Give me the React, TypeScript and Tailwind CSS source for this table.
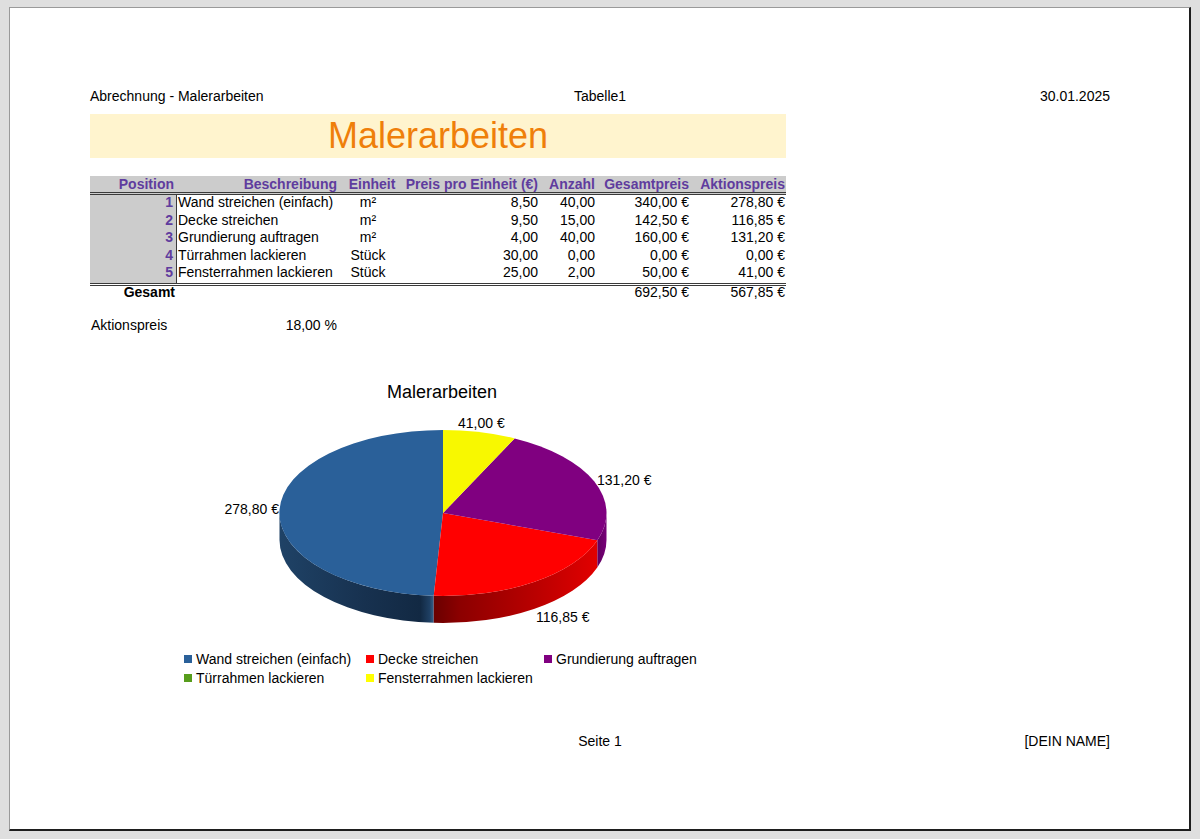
import React from "react";

type Row = { pos: number; desc: string; unit: string; price: string; qty: string; total: string; promo: string };

const rows: Row[] = [
  { pos: 1, desc: "Wand streichen (einfach)", unit: "m²", price: "8,50", qty: "40,00", total: "340,00 €", promo: "278,80 €" },
  { pos: 2, desc: "Decke streichen", unit: "m²", price: "9,50", qty: "15,00", total: "142,50 €", promo: "116,85 €" },
  { pos: 3, desc: "Grundierung auftragen", unit: "m²", price: "4,00", qty: "40,00", total: "160,00 €", promo: "131,20 €" },
  { pos: 4, desc: "Türrahmen lackieren", unit: "Stück", price: "30,00", qty: "0,00", total: "0,00 €", promo: "0,00 €" },
  { pos: 5, desc: "Fensterrahmen lackieren", unit: "Stück", price: "25,00", qty: "2,00", total: "50,00 €", promo: "41,00 €" },
];

const legend = [
  { label: "Wand streichen (einfach)", color: "bg-[#2a6099]" },
  { label: "Decke streichen", color: "bg-[#ff0000]" },
  { label: "Grundierung auftragen", color: "bg-[#800080]" },
  { label: "Türrahmen lackieren", color: "bg-[#579d1c]" },
  { label: "Fensterrahmen lackieren", color: "bg-[#ffff00]" },
];

const cols = "grid grid-cols-[87px_163px_60px_140px_57px_94px_95px]";

// pie geometry (svg coords, origin at page x=90 / y=403)
const cx = 353;
const cy = 110;
const rx = 163.5;
const ry = 83;
const depth = 27;

function pt(deg: number, dy = 0): string {
  const r = (deg * Math.PI) / 180;
  return `${(cx - rx * Math.sin(r)).toFixed(2)} ${(cy - ry * Math.cos(r) + dy).toFixed(2)}`;
}

function top(a: number, b: number): string {
  const large = b - a > 180 ? 1 : 0;
  return `M ${cx} ${cy} L ${pt(a)} A ${rx} ${ry} 0 ${large} 0 ${pt(b)} Z`;
}

function side(a: number, b: number): string {
  return `M ${pt(a)} A ${rx} ${ry} 0 0 0 ${pt(b)} L ${pt(b, depth)} A ${rx} ${ry} 0 0 1 ${pt(a, depth)} Z`;
}

const values = [278.8, 116.85, 131.2, 0, 41];
const sum = values.reduce((s, v) => s + v, 0);
const edges: number[] = [0];
values.forEach((v) => edges.push(edges[edges.length - 1] + (v / sum) * 360));
// blue [e0,e1], red [e1,e2], purple [e2,e3], yellow [e4,e5]

function PieChart() {
  return (
    <svg width="704" height="247" viewBox="0 0 704 247" className="block">
      <defs>
        <linearGradient id="blueSide" gradientUnits="userSpaceOnUse" x1="190" y1="0" x2="346" y2="0">
          <stop offset="0" stopColor="#1f4266" />
          <stop offset="0.55" stopColor="#17314f" />
          <stop offset="0.9" stopColor="#122943" />
          <stop offset="0.96" stopColor="#1f4064" />
          <stop offset="1" stopColor="#4373a3" />
        </linearGradient>
        <linearGradient id="redSide" gradientUnits="userSpaceOnUse" x1="344" y1="0" x2="517" y2="0">
          <stop offset="0" stopColor="#6a0000" />
          <stop offset="0.15" stopColor="#8c0000" />
          <stop offset="0.6" stopColor="#bb0000" />
          <stop offset="1" stopColor="#e80000" />
        </linearGradient>
        <linearGradient id="purpleSide" gradientUnits="userSpaceOnUse" x1="506" y1="0" x2="517" y2="0">
          <stop offset="0" stopColor="#5c005c" />
          <stop offset="1" stopColor="#7a007a" />
        </linearGradient>
      </defs>

      <path d={side(90, edges[1])} fill="url(#blueSide)" />
      <path d={side(edges[1], edges[2])} fill="url(#redSide)" />
      <path d={side(edges[2], 270)} fill="url(#purpleSide)" />

      <path d={top(edges[0], edges[1])} fill="#2a6099" />
      <path d={top(edges[1], edges[2])} fill="#ff0000" />
      <path d={top(edges[2], edges[3])} fill="#800080" />
      <path d={top(edges[4], edges[5])} fill="#f8f800" />

      <g fontSize="14" fill="#000" fontFamily="'Liberation Sans', Arial, sans-serif">
        <text x="368" y="25">41,00 €</text>
        <text x="507" y="82">131,20 €</text>
        <text x="189" y="111" textAnchor="end">278,80 €</text>
        <text x="446" y="219">116,85 €</text>
      </g>
    </svg>
  );
}

export default function App() {
  return (
    <div className="w-[1200px] h-[839px] bg-[#dfdfdf] pt-[7px] pl-[9px] overflow-hidden">
      <div className="w-[1182px] h-[824px] bg-white border-l border-t border-[#9a9a9a] border-r-2 border-b-2 border-r-[#1e1e1e] border-b-[#1e1e1e] pt-[80px] pl-[80px] pr-[79px] flex flex-col text-[14px] text-black font-['Liberation_Sans',Arial,sans-serif]">
        {/* page header */}
        <div className="grid grid-cols-3 h-[17px] leading-[17px]">
          <span>Abrechnung - Malerarbeiten</span>
          <span className="text-center">Tabelle1</span>
          <span className="text-right">30.01.2025</span>
        </div>

        <div className="mt-[9px] w-[696px] h-[44px] bg-[#fff4ce] flex items-center justify-center text-[36px] leading-none text-[#ef7f0a]">
          Malerarbeiten
        </div>

        {/* table */}
        <div className="mt-[18px] w-[696px] whitespace-nowrap">
          <div className={`${cols} h-[19px] leading-[16px] bg-[#cccccc] border-b-[3px] border-double border-[#3a3a3a] font-bold text-[#5f3c9e]`}>
            <span className="text-right pr-[3px]">Position</span>
            <span className="text-right pr-[3px]">Beschreibung</span>
            <span className="text-center pl-[4px]">Einheit</span>
            <span className="text-right pr-[2px]">Preis pro Einheit (€)</span>
            <span className="text-right pr-[2px]">Anzahl</span>
            <span className="text-right pr-[2px]">Gesamtpreis</span>
            <span className="text-right pr-[1px]">Aktionspreis</span>
          </div>

          <div className="border-b-[3px] border-double border-[#3a3a3a]">
            {rows.map((r) => (
              <div key={r.pos} className={`${cols} h-[17.6px] leading-[15.5px]`}>
                <span className="bg-[#cccccc] border-r border-[#3a3a3a] text-right pr-[3px] font-bold text-[#5f3c9e]">{r.pos}</span>
                <span className="pl-[1px]">{r.desc}</span>
                <span className="text-center pr-[4px]">{r.unit}</span>
                <span className="text-right pr-[2px]">{r.price}</span>
                <span className="text-right pr-[2px]">{r.qty}</span>
                <span className="text-right pr-[2px]">{r.total}</span>
                <span className="text-right pr-[1px]">{r.promo}</span>
              </div>
            ))}
          </div>

          <div className={`${cols} h-[13px] leading-[12px]`}>
            <span className="text-right pr-[2px] font-bold">Gesamt</span>
            <span />
            <span />
            <span />
            <span />
            <span className="text-right pr-[2px]">692,50 €</span>
            <span className="text-right pr-[1px]">567,85 €</span>
          </div>

          <div className={`${cols} mt-[18px] h-[17px] leading-[17px]`}>
            <span className="pl-[1px]">Aktionspreis</span>
            <span className="text-right pr-[3px]">18,00 %</span>
          </div>
        </div>

        {/* chart */}
        <div className="w-[704px]">
          <div className="mt-[48px] h-[21px] leading-[21px] text-center text-[18px]">Malerarbeiten</div>
          <PieChart />
          <div className="ml-[94px] grid grid-cols-[182px_178px_auto]">
            {legend.map((l) => (
              <div key={l.label} className="flex items-center gap-[4px] h-[19px] whitespace-nowrap">
                <span className={`w-[8px] h-[8px] ${l.color}`} />
                <span>{l.label}</span>
              </div>
            ))}
          </div>
        </div>

        {/* page footer */}
        <div className="mt-[45px] grid grid-cols-3 h-[17px] leading-[17px]">
          <span />
          <span className="text-center">Seite 1</span>
          <span className="text-right">[DEIN NAME]</span>
        </div>
      </div>
    </div>
  );
}
